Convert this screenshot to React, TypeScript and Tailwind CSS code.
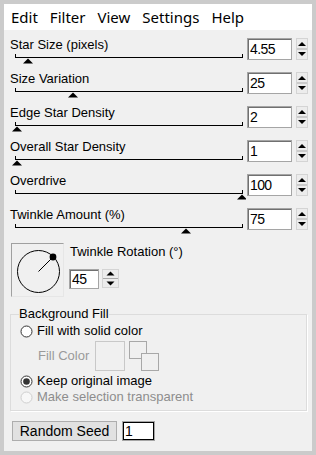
import React from "react";

const rows = [
  { label: "Star Size (pixels)", value: "4.55", thumb: 28 },
  { label: "Size Variation", value: "25", thumb: 73 },
  { label: "Edge Star Density", value: "2", thumb: 17 },
  { label: "Overall Star Density", value: "1", thumb: 17 },
  { label: "Overdrive", value: "100", thumb: 242 },
  { label: "Twinkle Amount (%)", value: "75", thumb: 186 },
];

function Spinner({ w, h }: { w: number; h: number }) {
  return (
    <svg width={w} height={h} className="block shrink-0">
      <rect x="0.5" y="0.5" width={w - 1} height={h - 1} fill="#ececec" stroke="#d4d4d4" />
      <line x1="1" x2={w - 1} y1={h / 2} y2={h / 2} stroke="#a8a8a8" strokeWidth="1" />
      <polygon points={`${w / 2 - 4},${h / 2 - 3} ${w / 2 + 4},${h / 2 - 3} ${w / 2},${h / 2 - 7}`} fill="#000" />
      <polygon points={`${w / 2 - 4},${h / 2 + 3} ${w / 2 + 4},${h / 2 + 3} ${w / 2},${h / 2 + 7}`} fill="#000" />
    </svg>
  );
}

function NumBox({ value, w, h, focused }: { value: string; w: number; h: number; focused?: boolean }) {
  return (
    <div
      className={`shrink-0 bg-white border border-[#a5a5a5] flex items-center pl-[2px] text-[14px] leading-none text-black ${
        focused ? "shadow-[inset_0_0_0_1px_#000]" : "shadow-[inset_1px_1px_0_#707070]"
      }`}
      style={{ width: w, height: h, fontFamily: '"Liberation Sans", Arial, sans-serif' }}
    >
      <span className="tracking-[-0.6px]">{value}</span>
    </div>
  );
}

function Slider({ thumb }: { thumb: number }) {
  const t = thumb - 10;
  return (
    <svg width="236" height="11" className="block">
      <line x1="5" x2="233" y1="4.5" y2="4.5" stroke="#000" strokeWidth="1" />
      <line x1="5.5" x2="5.5" y1="1" y2="5" stroke="#000" strokeWidth="1" />
      <line x1="232.5" x2="232.5" y1="1" y2="5" stroke="#000" strokeWidth="1" />
      <polygon points={`${t - 5},10.5 ${t + 5},10.5 ${t},5.5`} fill="#000" />
    </svg>
  );
}

function Radio({ checked, disabled }: { checked?: boolean; disabled?: boolean }) {
  return (
    <svg width="13" height="13" className="block shrink-0">
      <circle cx="6.5" cy="6.5" r="5.5" fill={disabled ? "#f7f7f7" : "#fff"} stroke={disabled ? "#cfcfcf" : "#333"} strokeWidth="1" />
      {checked && <circle cx="6.5" cy="6.5" r="3.3" fill="#333" />}
    </svg>
  );
}

export default function App() {
  const font = { fontFamily: '"Liberation Sans", Arial, sans-serif' };
  return (
    <div className="w-[316px] h-[455px] bg-[#cbcbcb] p-[4px] overflow-hidden">
      <div className="w-[308px] h-[447px] flex flex-col bg-[#f0f0f0]">
        <div
          className="h-[26px] bg-white flex items-center gap-[12px] pl-[7px] text-[15px] text-black"
          style={{ fontFamily: '"Noto Sans", "Open Sans", sans-serif' }}
        >
          <span>Edit</span>
          <span>Filter</span>
          <span>View</span>
          <span>Settings</span>
          <span>Help</span>
        </div>
        <div className="flex flex-col text-[13px] text-black" style={font}>
          <div className="flex flex-col pt-[7px]">
            {rows.map((r) => (
              <div key={r.label} className="h-[34px] flex items-start">
                <div className="ml-[6px] w-[236px] flex flex-col">
                  <div className="h-[16px] leading-[16px] whitespace-nowrap">{r.label}</div>
                  <Slider thumb={r.thumb} />
                </div>
                <div className="mt-[1px] ml-[1px] flex items-start gap-[4px]">
                  <NumBox value={r.value} w={45} h={22} />
                  <Spinner w={12} h={22} />
                </div>
              </div>
            ))}
          </div>
          <div className="flex items-start mt-[2px] h-[54px]">
            <div className="ml-[7px] w-[53px] h-[54px] border-t border-l border-[#a0a0a0] border-r-[#e6e6e6] border-b-[#e6e6e6] border-r border-b">
              <svg width="52" height="53" className="block">
                <circle cx="26.5" cy="27.5" r="21" fill="none" stroke="#000" strokeWidth="1" />
                <line x1="26.5" y1="27.5" x2="41" y2="13" stroke="#000" strokeWidth="1" />
                <circle cx="41" cy="13" r="3.4" fill="#000" />
              </svg>
            </div>
            <div className="ml-[5px] flex flex-col">
              <div className="h-[16px] leading-[16px] mt-[1px] pl-[1px] whitespace-nowrap">Twinkle Rotation (°)</div>
              <div className="mt-[9px] flex items-start gap-[3px]">
                <NumBox value="45" w={30} h={20} />
                <Spinner w={17} h={19} />
              </div>
            </div>
          </div>
          <fieldset className="ml-[6px] mt-[9px] w-[297px] border border-[#dcdcdc] pl-[8px] pb-[5px] shadow-[1px_1px_0_#fff]">
            <legend className="h-[16px] leading-[16px] px-0">Background Fill</legend>
            <div className="mt-[1px] h-[16px] flex items-center gap-[4px] pl-[1px]">
              <Radio />
              <span>Fill with solid color</span>
            </div>
            <div className="mt-[2px] h-[30px] flex items-center pl-[19px]">
              <span className="text-[#9a9a9a] w-[57px]">Fill Color</span>
              <div className="w-[30px] h-[30px] border border-[#c8c8c8]" />
              <svg width="32" height="30" className="block ml-[4px]">
                <rect x="0.5" y="0.5" width="17" height="17" fill="none" stroke="#a8a8a8" />
                <rect x="12.5" y="12.5" width="17" height="17" fill="#f0f0f0" stroke="#a8a8a8" />
              </svg>
            </div>
            <div className="mt-[2px] h-[16px] flex items-center gap-[4px] pl-[1px]">
              <Radio checked />
              <span>Keep original image</span>
            </div>
            <div className="h-[16px] flex items-center gap-[4px] pl-[1px]">
              <Radio disabled />
              <span className="text-[#8d8d8d]">Make selection transparent</span>
            </div>
          </fieldset>
          <div className="mt-[10px] ml-[8px] flex items-center gap-[5px]">
            <div className="w-[105px] h-[20px] bg-[#e1e1e1] border border-[#adadad] flex items-center justify-center text-[14px]">
              Random Seed
            </div>
            <NumBox value="1" w={33} h={20} focused />
          </div>
        </div>
      </div>
    </div>
  );
}
